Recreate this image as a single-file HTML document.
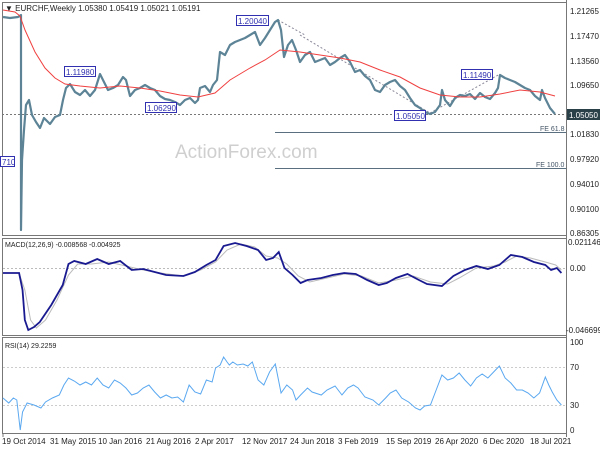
<!DOCTYPE html><html><head><style>
body{margin:0;width:600px;height:450px;background:#fff;overflow:hidden;font-family:"Liberation Sans",sans-serif}
svg text{font-family:"Liberation Sans",sans-serif;font-size:8px;fill:#222}
</style></head><body>
<svg width="600" height="450" xmlns="http://www.w3.org/2000/svg">
<rect x="0" y="0" width="600" height="450" fill="#fff"/>
<rect x="2.5" y="2.5" width="564" height="233" fill="none" stroke="#777"/>
<rect x="2.5" y="238.5" width="564" height="97" fill="none" stroke="#777"/>
<rect x="2.5" y="337.5" width="564" height="96" fill="none" stroke="#777"/>
<line x1="566.5" y1="0" x2="566.5" y2="437" stroke="#777"/>
<text x="175" y="158" style="font-size:19px;fill:#cfcfcf">ActionForex.com</text>
<line x1="275" y1="132.5" x2="566" y2="132.5" stroke="#5a7080"/>
<line x1="275" y1="168.5" x2="566" y2="168.5" stroke="#5a7080"/>
<text x="540" y="131" style="font-size:7px;fill:#456">FE 61.8</text>
<text x="536" y="167" style="font-size:7px;fill:#456">FE 100.0</text>
<line x1="2" y1="114.5" x2="566" y2="114.5" stroke="#777" stroke-dasharray="2,2"/>
<polyline points="278,20 305,35" fill="none" stroke="#889" stroke-dasharray="2,2"/>
<polyline points="300,35 430,113" fill="none" stroke="#889" stroke-dasharray="2,2"/>
<polyline points="430,113 500,74" fill="none" stroke="#889" stroke-dasharray="2,2"/>
<polyline fill="none" stroke="#5d8496" stroke-width="2.2" stroke-linejoin="round" points="3,17 10,18 18,17 21,15 21,230 22,160 24,130 26,105 29,100 32,115 36,122 40,128 44,118 50,124 55,117 60,115 63,100 66,88 70,84 75,92 80,95 85,90 90,96 95,90 100,74 103,80 108,90 113,88 118,85 123,77 126,80 130,96 135,90 140,88 145,85 150,88 155,90 160,96 165,99 170,100 175,102 180,105 185,100 190,98 195,103 198,100 200,88 205,86 210,92 213,85 217,80 220,52 225,55 230,45 235,42 240,40 245,38 250,35 255,32 260,45 265,38 270,30 275,22 278,20 281,30 284,57 288,45 292,40 296,50 300,62 305,55 310,52 315,62 320,60 325,58 330,65 335,62 340,58 345,55 350,62 355,72 360,70 365,76 370,80 375,90 380,92 385,85 390,82 395,80 400,86 405,90 410,98 415,105 420,108 425,112 430,114 435,112 440,105 442,90 445,100 450,106 455,98 460,95 465,96 470,94 475,99 480,93 485,97 490,99 495,93 498,88 500,75 505,78 510,80 515,82 520,85 525,88 530,90 535,96 540,100 542,90 545,98 550,108 555,114"/>
<polyline fill="none" stroke="#f04040" stroke-width="1" points="3,10 15,12 20,16 25,30 35,52 45,68 55,78 65,84 80,86 100,88 120,86 140,88 160,91 180,95 198,97 215,93 230,80 250,68 265,60 280,50 300,52 320,55 340,58 360,62 380,70 400,77 420,88 440,95 460,97 480,97 500,94 520,90 540,92 555,96"/>
<g style="font-size:8px">
<rect x="64.5" y="66.5" width="31" height="10" fill="#fff" stroke="#3030b0"/><text x="66" y="75" style="fill:#3030b0">1.11980</text>
<rect x="145.5" y="102.5" width="31" height="10" fill="#fff" stroke="#3030b0"/><text x="147" y="111" style="fill:#3030b0">1.06290</text>
<rect x="236.5" y="15.5" width="32" height="10" fill="#fff" stroke="#3030b0"/><text x="238" y="24" style="fill:#3030b0">1.20040</text>
<rect x="461.5" y="69.5" width="31" height="10" fill="#fff" stroke="#3030b0"/><text x="463" y="78" style="fill:#3030b0">1.11490</text>
<rect x="394.5" y="110.5" width="31" height="10" fill="#fff" stroke="#3030b0"/><text x="396" y="119" style="fill:#3030b0">1.05050</text>
<rect x="0.5" y="156.5" width="14" height="10" fill="#fff" stroke="#3030b0"/><text x="2" y="165" style="fill:#3030b0">710</text>
</g>
<text x="5" y="11"><tspan>▼</tspan> EURCHF,Weekly  1.05380 1.05419 1.05021 1.05191</text>
<g style="font-size:7.5px">
<text x="570" y="14">1.21265</text><text x="570" y="39">1.17470</text><text x="570" y="64">1.13560</text><text x="570" y="88">1.09650</text><text x="570" y="137">1.01830</text><text x="570" y="162">0.97920</text><text x="570" y="187">0.94010</text><text x="570" y="212">0.90100</text><text x="570" y="236">0.86305</text>
<text x="568" y="245">0.021146</text><text x="570" y="271">0.00</text><text x="566" y="333">-0.046699</text>
<text x="570" y="345">100</text><text x="570" y="370">70</text><text x="570" y="408">30</text><text x="570" y="433">0</text>
</g>
<rect x="567" y="109" width="33" height="11" fill="#2a4048"/><text x="569" y="118" style="fill:#fff;font-size:8px">1.05050</text>
<line x1="3" y1="268.5" x2="566" y2="268.5" stroke="#bbb" stroke-dasharray="2,2"/>
<text x="5" y="247" style="font-size:7px">MACD(12,26,9) -0.008568 -0.004925</text>
<line x1="3" y1="367.5" x2="566" y2="367.5" stroke="#ccc" stroke-dasharray="2,2"/>
<line x1="3" y1="405.5" x2="566" y2="405.5" stroke="#ccc" stroke-dasharray="2,2"/>
<text x="5" y="348" style="font-size:7px">RSI(14) 29.2259</text>
<g transform="translate(3,0) scale(1.149,1) translate(-3,0)">
<polyline vector-effect="non-scaling-stroke" fill="none" stroke="#bbb" stroke-width="1" points="3,273 17,273 22,290 27,320 32,328 40,320 50,300 60,275 68,264 80,264 95,262 110,266 125,270 140,273 160,276 175,270 188,262 198,250 210,244 222,247 232,256 242,258 250,264 260,276 270,282 285,278 300,274 315,276 330,283 345,280 360,276 375,282 390,284 400,278 415,268 430,266 440,262 450,256 462,258 475,262 484,265 489,270"/>
<polyline vector-effect="non-scaling-stroke" fill="none" stroke="#1a1a90" stroke-width="1.8" points="3,273 17,273 20,290 22,320 25,330 30,327 35,322 45,305 55,285 60,264 65,261 75,264 85,259 95,264 105,261 115,270 125,269 135,272 145,275 160,276 170,272 180,265 188,260 195,246 205,243 215,246 225,250 232,260 238,258 243,252 248,268 255,275 262,283 268,280 280,278 290,275 300,273 310,274 320,280 330,285 337,283 345,278 355,274 365,280 372,284 385,286 395,276 405,270 415,266 425,269 435,265 445,255 455,257 465,262 475,265 480,270 485,268 489,273"/>
<polyline vector-effect="non-scaling-stroke" fill="none" stroke="#5aa8f0" stroke-width="1" points="3,398 8,403 12,398 15,400 18,430 20,412 24,403 30,405 36,408 40,402 46,398 52,395 56,385 60,378 65,381 70,385 75,382 80,385 85,378 90,385 95,388 100,380 105,383 110,388 115,395 120,393 125,388 130,385 135,392 140,398 145,395 150,398 155,397 160,402 165,385 170,392 175,394 180,380 185,382 188,368 192,365 195,357 198,362 200,365 203,362 207,365 212,364 216,366 220,362 225,380 230,385 235,372 240,364 245,393 250,385 255,390 258,400 262,395 268,388 272,392 280,395 285,390 292,386 298,395 303,388 308,385 312,388 318,397 325,400 330,405 336,398 340,393 345,390 350,398 356,402 362,408 366,410 370,406 375,405 380,390 385,375 390,380 395,378 400,373 405,380 410,386 415,378 420,374 425,378 430,372 435,366 440,378 445,383 450,390 455,390 460,393 465,398 470,393 475,377 478,385 481,392 485,400 489,405"/>
</g>
<g style="font-size:7px">
<line x1="3" y1="434" x2="3" y2="437" stroke="#777"/>
<text x="2" y="444">19 Oct 2014</text><text x="50" y="444">31 May 2015</text><text x="98" y="444">10 Jan 2016</text><text x="146" y="444">21 Aug 2016</text><text x="195" y="444">2 Apr 2017</text><text x="242" y="444">12 Nov 2017</text><text x="290" y="444">24 Jun 2018</text><text x="338" y="444">3 Feb 2019</text><text x="386" y="444">15 Sep 2019</text><text x="435" y="444">26 Apr 2020</text><text x="483" y="444">6 Dec 2020</text><text x="530" y="444">18 Jul 2021</text>
</g>
</svg>
</body></html>
